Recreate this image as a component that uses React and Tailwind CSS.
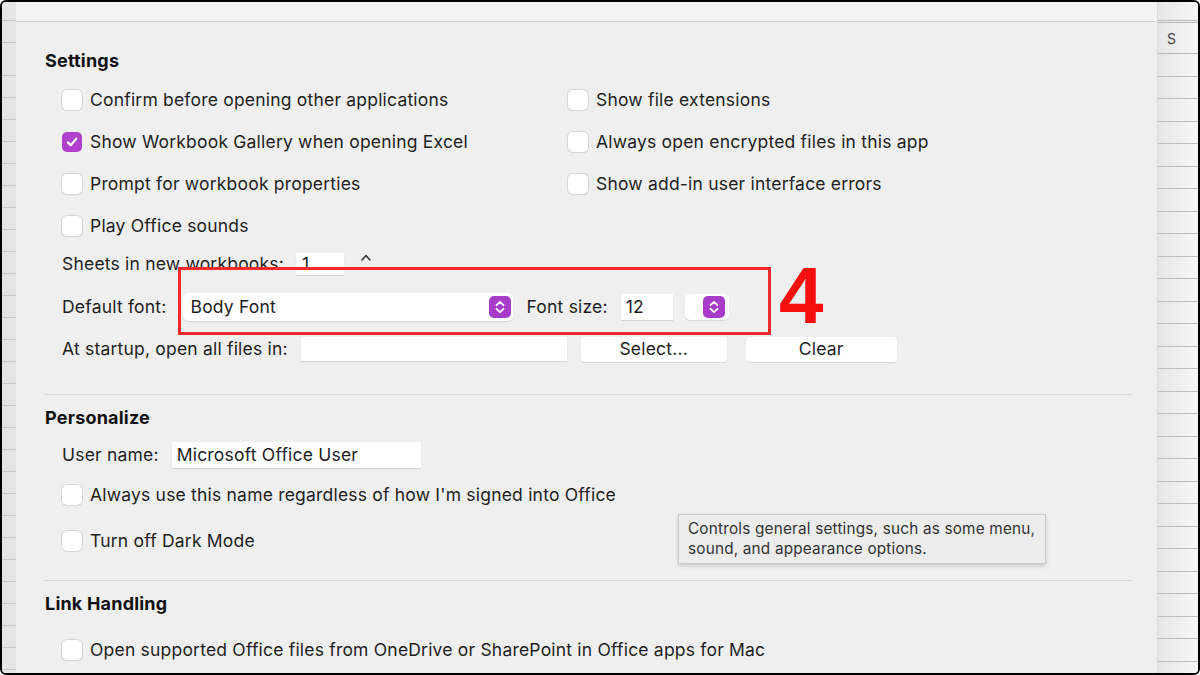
import React from 'react'

const Check = ({ checked }) => (
  <span className={`flex h-[20px] w-[20px] shrink-0 items-center justify-center rounded-[5px] ${checked ? 'bg-[#b03fcd]' : 'bg-white shadow-[0_0_0_1px_#d6d6d6,0_1px_1px_rgba(0,0,0,0.12)]'}`}>
    {checked && (
      <svg width="14" height="14" viewBox="0 0 14 14" fill="none">
        <path d="M2.8 7.4 L5.8 10.3 L11.3 3.6" stroke="white" strokeWidth="2.2" strokeLinecap="round" strokeLinejoin="round" />
      </svg>
    )}
  </span>
)

const Row = ({ checked, label, h = 'h-[42px]' }) => (
  <div className={`flex ${h} items-center gap-[8px]`}>
    <Check checked={checked} />
    <span>{label}</span>
  </div>
)

const Stepper = () => (
  <span className="flex h-[22px] w-[22px] items-center justify-center rounded-[5px] bg-[#a83cc9]">
    <svg width="14" height="16" viewBox="0 0 14 16" fill="none">
      <path d="M3.5 6.2 L7 2.8 L10.5 6.2" stroke="white" strokeWidth="1.8" strokeLinecap="round" strokeLinejoin="round" />
      <path d="M3.5 9.8 L7 13.2 L10.5 9.8" stroke="white" strokeWidth="1.8" strokeLinecap="round" strokeLinejoin="round" />
    </svg>
  </span>
)

const field = 'bg-white shadow-[0_1px_1px_rgba(0,0,0,0.1)]'
const heading = 'text-[18px] font-bold leading-[22px] tracking-[0.2px] text-[#111]'

export default function App(){
  const leftRows = Array.from({ length: 28 })
  const rightRows = Array.from({ length: 28 })
  return (
    <div className="relative flex h-[675px] w-[1200px] overflow-hidden rounded-[6px] border-2 border-black bg-[#efefef] font-['Inter',sans-serif] text-[17.5px] tracking-[0.2px] text-[#1e1e1e]">
      {/* sheet strip left */}
      <div className="w-[14px] shrink-0 bg-[#e4e4e4]">
        <div className="h-[19px] border-b border-[#c4c4c4]" />
        <div className="h-[22px] border-b border-[#c4c4c4]" />
        <div className="h-[33px] border-b border-[#c4c4c4]" />
        {leftRows.map((_, i) => <div key={i} className="h-[22px] border-b border-[#c8c8c8]" />)}
      </div>

      {/* dialog */}
      <div className="flex-1 border-r border-[#dcdcdc] bg-[#efefef]">
        <div className="h-[20px] border-b border-[#d4d4d4] bg-[#f3f3f3]" />
        <div className="pl-[29px] pr-[25px]">
          <div className={`mt-[28px] ${heading}`}>Settings</div>
          <div className="mt-[7px] pl-[17px]">
            <div className="grid grid-cols-[506px_1fr]">
              <div>
                <Row label="Confirm before opening other applications" />
                <Row checked label="Show Workbook Gallery when opening Excel" />
                <Row label="Prompt for workbook properties" />
                <Row label="Play Office sounds" />
              </div>
              <div>
                <Row label="Show file extensions" />
                <Row label="Always open encrypted files in this app" />
                <Row label="Show add-in user interface errors" />
              </div>
            </div>
            <div className="flex h-[34px] items-center">
              <span>Sheets in new workbooks:</span>
              <span className={`ml-[12px] flex h-[22px] w-[48px] items-center pl-[6px] ${field}`}>1</span>
              <span className="ml-[14px] flex h-[24px] w-[16px] items-start justify-center">
                <svg width="12" height="10" viewBox="0 0 12 10" fill="none" className="mt-[1px]">
                  <path d="M2 7 L6 2.5 L10 7" stroke="#333" strokeWidth="1.6" strokeLinecap="round" strokeLinejoin="round" />
                </svg>
              </span>
            </div>
            <div className="flex h-[52px] items-center">
              <span>Default font:</span>
              <span className={`ml-[16px] flex h-[28px] w-[330px] items-center justify-between rounded-[5px] pl-[8px] pr-[2px] ${field}`}>
                <span>Body Font</span>
                <Stepper />
              </span>
              <span className="ml-[14px]">Font size:</span>
              <span className={`ml-[13px] flex h-[26px] w-[52px] items-center pl-[5px] ${field}`}>12</span>
              <span className={`ml-[12px] flex h-[26px] w-[44px] items-center justify-end rounded-[5px] pr-[4px] ${field}`}>
                <Stepper />
              </span>
            </div>
            <div className="flex h-[32px] items-center">
              <span>At startup, open all files in:</span>
              <span className={`ml-[13px] h-[24px] w-[266px] ${field}`} />
              <span className={`ml-[14px] flex h-[25px] w-[146px] items-center justify-center rounded-[4px] ${field}`}>Select...</span>
              <span className={`ml-[19px] flex h-[25px] w-[151px] items-center justify-center rounded-[4px] ${field}`}>Clear</span>
            </div>
          </div>

          <div className="mt-[29px] h-px bg-[#d8d8d8]" />
          <div className={`mt-[12px] ${heading}`}>Personalize</div>
          <div className="pl-[17px]">
            <div className="mt-[6px] flex h-[40px] items-center">
              <span>User name:</span>
              <span className={`ml-[13px] flex h-[26px] w-[249px] items-center pl-[5px] ${field}`}>Microsoft Office User</span>
            </div>
            <Row h="h-[40px]" label="Always use this name regardless of how I'm signed into Office" />
            <div className="mt-[5px]">
              <Row label="Turn off Dark Mode" />
            </div>
          </div>

          <div className="mt-[18px] h-px bg-[#d8d8d8]" />
          <div className={`mt-[12px] ${heading}`}>Link Handling</div>
          <div className="mt-[14px] pl-[17px]">
            <Row label="Open supported Office files from OneDrive or SharePoint in Office apps for Mac" />
          </div>
        </div>
      </div>

      {/* sheet strip right */}
      <div className="w-[40px] shrink-0 bg-gradient-to-r from-[#e6e6e6] to-[#f6f6f6]">
        <div className="h-[19px] border-b border-[#b8b8b8]" />
        <div className="h-[2px] border-b border-[#b8b8b8]" />
        <div className="flex h-[31px] items-center border-b border-[#b8b8b8] pl-[9px] text-[14px] text-[#444]">S</div>
        {rightRows.map((_, i) => <div key={i} className="h-[22.5px] border-b border-[#bdbdbd]" />)}
      </div>

      {/* annotation */}
      <div className="absolute left-[176px] top-[265px] h-[68px] w-[593px] border-[3px] border-[#f42a2a]" />
      <div className="absolute left-[777px] top-[254px] font-['Liberation_Sans',Arial,sans-serif] text-[80px] font-bold leading-[80px] text-[#f70f0f]">4</div>

      {/* tooltip */}
      <div className="absolute left-[676px] top-[512px] w-[368px] border border-[#cacaca] bg-[#ececec] px-[9px] py-[4px] text-[15.3px] leading-[20px] tracking-[0.2px] text-[#333] shadow-[0_2px_4px_rgba(0,0,0,0.15)]">
        Controls general settings, such as some menu, sound, and appearance options.
      </div>
    </div>
  )
}
